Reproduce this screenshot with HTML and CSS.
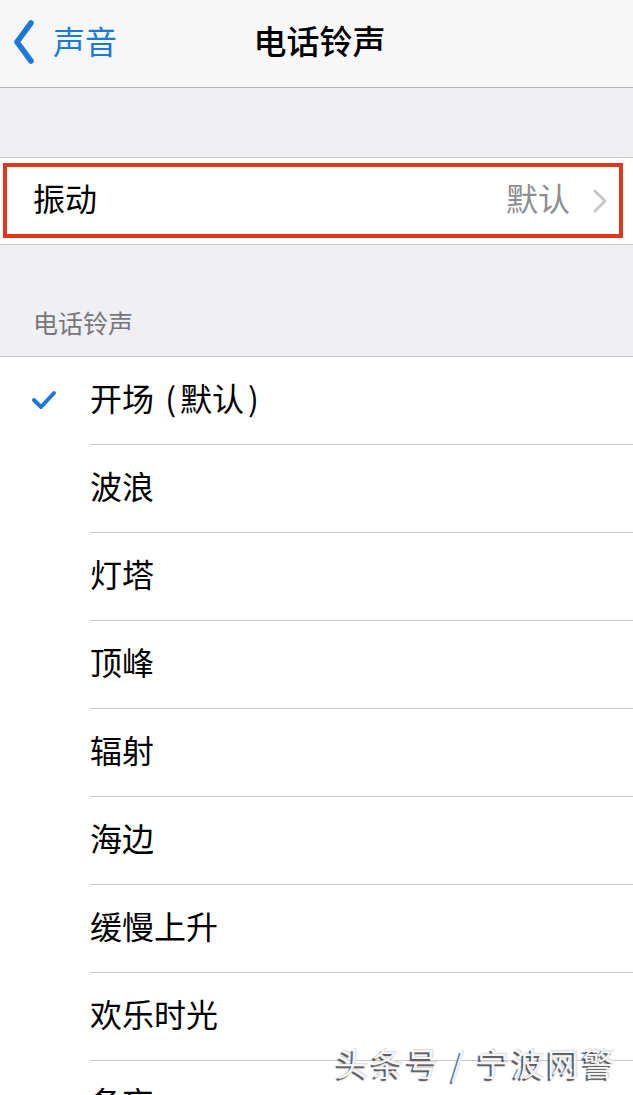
FILE: index.html
```html
<html>
  <head>
    <meta charset="utf-8">
    <link rel="stylesheet" href="styles.css">
  </head>
  <body>
    <div class="nav">
      <div class="back">
        <svg class="back-icon" width="22" height="44" viewBox="0 0 22 44">
          <path d="M18 3 L4 22 L18 41" fill="none" stroke="#1b7ad8" stroke-width="5.5" stroke-linecap="round" stroke-linejoin="round"/>
        </svg>
        <span>声音</span>
      </div>
      <div class="title">电话铃声</div>
    </div>

    <div class="spacer"></div>

    <div class="group">
      <div class="row vib">
        <span class="label">振动</span>
        <span class="value">默认</span>
        <svg class="chev" width="16" height="26" viewBox="0 0 16 26">
          <path d="M3 3 L13 13 L3 23" fill="none" stroke="#c7c7cc" stroke-width="3" stroke-linecap="round" stroke-linejoin="round"/>
        </svg>
      </div>
    </div>

    <div class="section">电话铃声</div>

    <div class="group list">
      <div class="item">
        <svg class="check" width="26" height="22" viewBox="0 0 26 22">
          <path d="M3 11 L10 18 L23 4" fill="none" stroke="#1b7ad8" stroke-width="4" stroke-linecap="round" stroke-linejoin="round"/>
        </svg>
        <span class="label">开场 <span class="paren">(</span>默认<span class="paren">)</span></span>
      </div>
      <div class="item"><span class="label">波浪</span></div>
      <div class="item"><span class="label">灯塔</span></div>
      <div class="item"><span class="label">顶峰</span></div>
      <div class="item"><span class="label">辐射</span></div>
      <div class="item"><span class="label">海边</span></div>
      <div class="item"><span class="label">缓慢上升</span></div>
      <div class="item"><span class="label">欢乐时光</span></div>
      <div class="item"><span class="label">备忘</span></div>
    </div>

    <div class="mark">头条号 / 宁波网警</div>
  </body>
</html>
```

FILE: styles.css
```css
*{
  margin: 0;
  padding: 0;
  box-sizing: border-box;
}
body{
  background: #efeff4;
  font-family: "Noto Sans CJK SC", "Noto Sans", sans-serif;
  color: #000;
  width: 633px;
  height: 1095px;
  overflow: hidden;
  position: relative;
}
.nav{
  height: 88px;
  background: #f7f7f8;
  border-bottom: 1px solid #b5b5b8;
  position: relative;
  display: flex;
  align-items: center;
  justify-content: center;
  padding-bottom: 8px;
}
.back{
  position: absolute;
  left: 13px;
  top: 20px;
  display: flex;
  align-items: center;
  gap: 18px;
  color: #1b7ad8;
  font-size: 32px;
  line-height: 44px;
}
.back span{
  margin-top: -4px;
}
.title{
  font-size: 33px;
  font-weight: 500;
  line-height: 44px;
  margin-left: 6px;
}
.spacer{
  height: 69px;
}
.group{
  background: #fff;
  border-top: 1px solid #c8c7cc;
  border-bottom: 1px solid #c8c7cc;
}
.row{
  height: 86px;
  display: flex;
  align-items: center;
  padding: 0 25px 0 33px;
  font-size: 32px;
}
.row .label,
.row .value{
  margin-top: -8px;
}
.vib{
  position: relative;
}
.vib::after{
  content: "";
  position: absolute;
  left: 3px;
  right: 10px;
  top: 5px;
  bottom: 6px;
  border: 4px solid #e2361f;
}
.row .label{
  flex: 1;
}
.row .value{
  color: #8e8e93;
  margin-right: 22px;
}
.section{
  height: 111px;
  display: flex;
  align-items: flex-end;
  padding: 0 0 17px 33px;
  font-size: 25px;
  color: #77777c;
  line-height: 34px;
}
.list{
  border-bottom: none;
}
.item{
  height: 88px;
  margin-left: 90px;
  border-bottom: 1px solid #c8c7cc;
  display: flex;
  align-items: center;
  font-size: 32px;
  position: relative;
  padding-bottom: 8px;
}
.paren{
  margin: 0 4px;
}
.check{
  position: absolute;
  left: -59px;
  top: 32px;
}
.mark{
  position: absolute;
  left: 336px;
  top: 1042px;
  font-size: 32px;
  line-height: 40px;
  color: #f4f4f4;
  letter-spacing: 3px;
  text-shadow: -2px 2px 1px #555, 1px -1px 0 #ddd;
}
```
